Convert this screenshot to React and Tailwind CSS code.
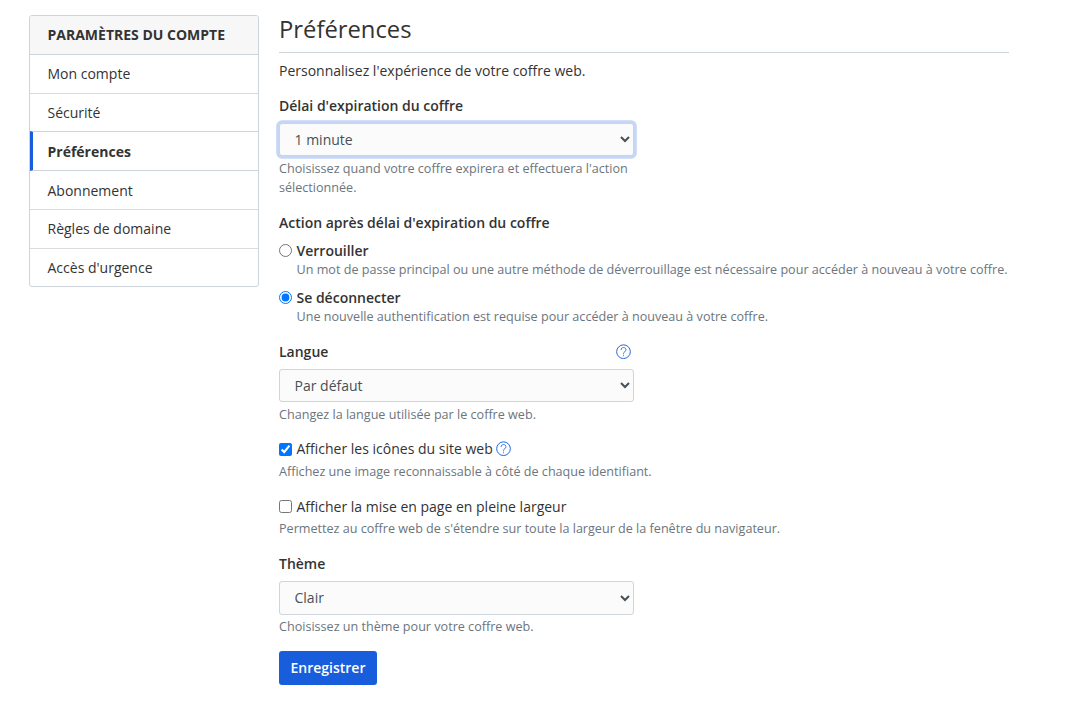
import React from "react";

const nav = [
  { label: "Mon compte", cls: "h-[39px] border-t-[#ced4dc] pb-px" },
  { label: "Sécurité", cls: "h-[38px] border-t-[#dadbdd]" },
  { label: "Préférences", active: true, cls: "relative h-[40px] -mb-px border-y border-y-[#ced4dc]" },
  { label: "Abonnement", cls: "h-[39px] border-t-[#ced4dc]" },
  { label: "Règles de domaine", cls: "h-[39px] border-t-[#dadbdd] pb-px" },
  { label: "Accès d'urgence", cls: "h-[38px] border-t-[#dadbdd]" },
];

function HelpIcon({ className = "" }) {
  return (
    <svg viewBox="0 0 16 16" className={"block size-[15px] shrink-0 text-[#175ddc] " + className} fill="none" stroke="currentColor">
      <circle cx="8" cy="8.2" r="7.3" strokeWidth="1" />
      <path d="M5.4 6C5.4 4.6 6.5 3.8 8 3.8s2.6.9 2.6 2.2c0 1.1-.6 1.7-1.3 2.3C8.4 9 8 9.5 8 10.6" strokeWidth=".9" strokeLinecap="round" />
      <circle cx="8" cy="12.5" r=".6" fill="currentColor" stroke="none" />
    </svg>
  );
}

function Select({ value, focused, className = "h-[34px]" }) {
  return (
    <select
      className={
        "block w-[355px] rounded-[3px] border border-[#ced4dc] bg-[#fbfbfb] pl-[10.5px] pr-[11px] pb-px text-[14px] text-[#465057] outline-none " +
        (focused ? "shadow-[0_0_0_2.8px_rgba(23,93,220,0.25)] " : "") + className
      }
    >
      <option>{value}</option>
    </select>
  );
}

function Hint({ children, className = "" }) {
  return <small className={"block text-[12.6px] leading-[19px] text-[#6c757d] " + className}>{children}</small>;
}

export default function App() {
  return (
    <div className="flex h-[717px] gap-5 overflow-hidden bg-white pl-[29px] pt-[15px] font-['Open_Sans',sans-serif] text-[14px] leading-[21px] text-[#333]">
      <nav className="h-[272px] w-[230px] shrink-0 overflow-hidden rounded-[3px] border border-[#ced4dc]">
        <div className="flex h-[38px] items-center bg-[#f7f7f7] pb-[2px] pl-[17.5px] font-bold">PARAMÈTRES DU COMPTE</div>
        {nav.map((n) => (
          <div
            key={n.label}
            className={
              "flex items-center border-t " + n.cls +
              (n.active ? " border-l-3 border-l-[#175ddc] pl-[14.5px] font-bold" : " pl-[17.5px]")
            }
          >
            {n.label}
          </div>
        ))}
      </nav>
      <main className="w-[730px]">
        <h1 className="h-[38px] border-b border-[#ced4dc] text-[23.8px] leading-[29px]">Préférences</h1>
        <p className="mt-[7px]">Personnalisez l'expérience de votre coffre web.</p>
        <div className="mt-[14px] font-semibold">Délai d'expiration du coffre</div>
        <div className="mt-[7px]"><Select value="1 minute" focused className="h-[33px]" /></div>
        <Hint className="mt-[3px] w-[355px]">Choisissez quand votre coffre expirera et effectuera l'action sélectionnée.</Hint>
        <div className="mt-[15px] font-semibold">Action après délai d'expiration du coffre</div>
        <label className="mt-[7px] flex items-center gap-[4.5px] font-semibold">
          <input type="radio" name="action" className="size-[13px]" />Verrouiller
        </label>
        <Hint className="-mt-px pl-[17.5px] whitespace-nowrap">Un mot de passe principal ou une autre méthode de déverrouillage est nécessaire pour accéder à nouveau à votre coffre.</Hint>
        <label className="mt-[8px] flex items-center gap-[4.5px] font-semibold">
          <input type="radio" name="action" defaultChecked className="size-[13px]" />Se déconnecter
        </label>
        <Hint className="-mt-px pl-[17.5px]">Une nouvelle authentification est requise pour accéder à nouveau à votre coffre.</Hint>
        <div className="mt-[15px] flex w-[352px] items-center justify-between font-semibold">Langue<HelpIcon /></div>
        <div className="mt-[7px]"><Select value="Par défaut" className="h-[33px]" /></div>
        <Hint className="mt-[3px]">Changez la langue utilisée par le coffre web.</Hint>
        <label className="mt-[14px] flex items-center gap-[4.5px]">
          <input type="checkbox" defaultChecked className="mt-px size-[13px]" />Afficher les icônes du site web<HelpIcon className="-ml-px" />
        </label>
        <Hint className="mt-[3px]">Affichez une image reconnaissable à côté de chaque identifiant.</Hint>
        <label className="mt-[15px] flex items-center gap-[4.5px]">
          <input type="checkbox" className="size-[13px]" />Afficher la mise en page en pleine largeur
        </label>
        <Hint className="mt-[2px]">Permettez au coffre web de s'étendre sur toute la largeur de la fenêtre du navigateur.</Hint>
        <div className="mt-[15px] font-semibold">Thème</div>
        <div className="mt-[7px]"><Select value="Clair" /></div>
        <Hint className="mt-[2px]">Choisissez un thème pour votre coffre web.</Hint>
        <button className="mt-[15px] block h-[34px] w-[98px] rounded-[3px] bg-[#175ddc] pb-px font-semibold text-white">Enregistrer</button>
      </main>
    </div>
  );
}
